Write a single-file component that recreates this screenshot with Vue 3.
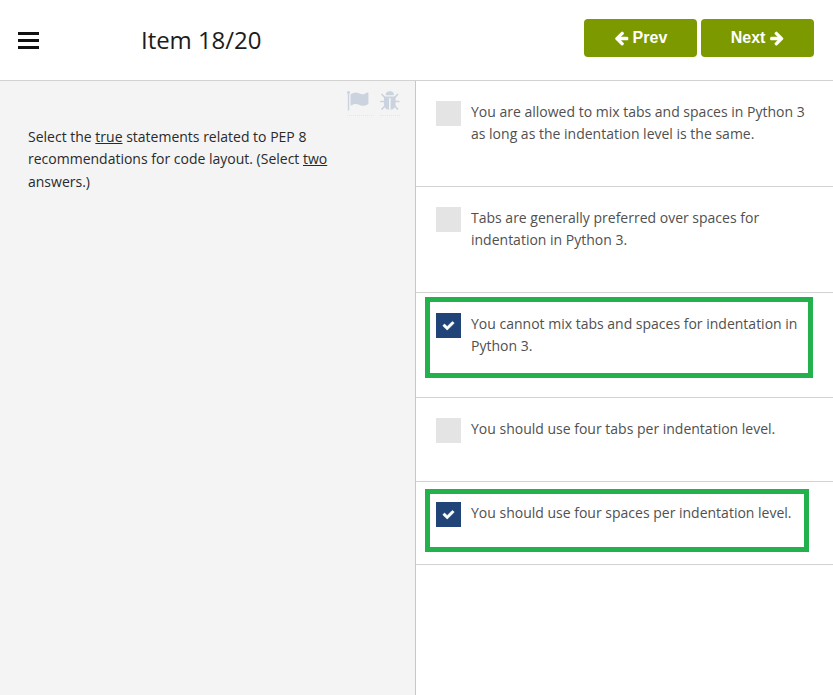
<script setup>
import { ref } from 'vue'

const options = ref([
  { text: 'You are allowed to mix tabs and spaces in Python 3 as long as the indentation level is the same.', checked: false },
  { text: 'Tabs are generally preferred over spaces for indentation in Python 3.', checked: false },
  { text: 'You cannot mix tabs and spaces for indentation in Python 3.', checked: true, mark: 'tall' },
  { text: 'You should use four tabs per indentation level.', checked: false },
  { text: 'You should use four spaces per indentation level.', checked: true, mark: 'short' },
])
</script>

<template>
  <div class="page">
    <header class="header">
      <svg class="menu" viewBox="0 0 21 18" fill="#111"><path d="M0 0h21v3H0zM0 7h21v3H0zM0 14h21v3H0z" /></svg>
      <h1 class="title">Item 18/20</h1>
      <nav class="nav">
        <button class="btn">
          <svg class="arrow" viewBox="64 0 1664 1792"><path d="M1664 896v128q0 53-32.5 90.5t-84.5 37.5h-704l293 294q38 36 38 90t-38 90l-75 76q-37 37-90 37-52 0-91-37l-651-652q-37-37-37-90 0-52 37-91l651-650q38-38 91-38 52 0 90 38l75 74q38 38 38 91t-38 91l-293 293h704q52 0 84.500 37.500t32.500 90.500z" /></svg>
          <span>Prev</span>
        </button>
        <button class="btn">
          <span>Next</span>
          <svg class="arrow" viewBox="0 0 1664 1792"><path d="M1600 960q0 54-37 91l-651 651q-39 37-91 37-51 0-90-37l-75-75q-38-38-38-91t38-91l293-293h-704q-52 0-84.500-37.500t-32.500-90.500v-128q0-53 32.500-90.500t84.500-37.500h704l-293-294q-38-36-38-90t38-90l75-75q38-38 90-38 53 0 91 38l651 651q37 35 37 90z" /></svg>
        </button>
      </nav>
    </header>
    <main class="main">
      <section class="question">
        <div class="tools">
          <span class="tool flag">
            <svg width="22" height="20" viewBox="0 0 22 20" fill="#cbd3df">
              <path d="M0 1.500a1.500 1.500 0 0 1 3 0q0 .8-.8 1.300V19q0 .5-.5.5h-.4q-.5 0-.5-.5V2.800Q0 2.300 0 1.500z" />
              <path d="M3.500 3.300Q6.500 1.500 8.700 1.500c2.800 0 4 1.700 6.500 1.700 2 0 3.600-1 5.300-1.800q.9-.2.9.7v10.300q0 .6-.5.800c-1.800.9-3.500 1.600-5.400 1.600-2.900 0-4.100-1.700-7-1.700-1.500 0-3 .7-4.300 1.500q-.7.3-.7-.5z" />
            </svg>
          </span>
          <span class="tool bug">
            <svg width="20" height="20" viewBox="0 0 20 20">
              <path d="M5.700 4.300a4.100 4.100 0 0 1 8.200 0z" fill="#cbd3df" />
              <path d="M4 5.500h11.600v7.500q0 5.300-5 5.700V7H9v11.700Q4 18.300 4 13z" fill="#cbd3df" />
              <path d="M2 3.500l3.300 3.300M17.600 3.500l-3.300 3.300M0.800 10.500h4.500M18.800 10.500h-4.500M5.300 14.500l-3.200 3.500M14.300 14.500l3.200 3.500" fill="none" stroke="#cbd3df" stroke-width="1.700" stroke-linecap="round" />
            </svg>
          </span>
        </div>
        <p class="prompt">Select the <u>true</u> statements related to PEP 8 recommendations for code layout. (Select <u>two</u> answers.)</p>
      </section>
      <section class="options">
        <div v-for="option in options" :key="option.text" class="option">
          <span class="box" :class="{ checked: option.checked }">
            <svg v-if="option.checked" width="13" height="13" viewBox="0 0 1792 1792"><path fill="#fff" stroke="#fff" stroke-width="50" d="M1671 566q0 40-28 68l-724 724-136 136q-28 28-68 28t-68-28l-136-136-362-362q-28-28-28-68t28-68l136-136q28-28 68-28t68 28l294 295 656-657q28-28 68-28t68 28l136 136q28 28 28 68z" /></svg>
          </span>
          <span class="label">{{ option.text }}</span>
          <span v-if="option.mark" class="highlight" :class="option.mark"></span>
        </div>
      </section>
    </main>
  </div>
</template>

<style>
body {
  background: #fff;
}
</style>

<style scoped>
.page {
  display: flex;
  flex-direction: column;
  height: 695px;
  overflow: hidden;
  font-family: 'Open Sans', sans-serif;
  font-size: 14px;
}
.header {
  box-sizing: border-box;
  display: flex;
  align-items: center;
  height: 81px;
  padding: 0 19px 0 18px;
  border-bottom: 1px solid #d2d2d2;
}
.menu {
  width: 21px;
  height: 18px;
  margin-top: 2px;
}
.title {
  margin: 0 0 0 102px;
  color: #1c1c1c;
  font-size: 24px;
  font-weight: 400;
  line-height: 34px;
  letter-spacing: -0.050px;
}
.nav {
  display: flex;
  gap: 4px;
  margin: 0 0 4px auto;
}
.btn {
  display: flex;
  align-items: center;
  justify-content: center;
  gap: 4px;
  width: 113px;
  height: 38px;
  padding: 0;
  border: 0;
  border-radius: 4px;
  background: #7c9a00;
  color: #fff;
  font: bold 16px/20px 'Liberation Sans', sans-serif;
}
.arrow {
  width: 14.900px;
  height: 16px;
  fill: #fff;
}
.main {
  display: flex;
  flex: 1;
}
.question {
  box-sizing: border-box;
  width: 416px;
  padding: 10px 15px 0 28px;
  border-right: 1px solid #c8c8c8;
  background: #f4f4f4;
}
.tools {
  display: flex;
  justify-content: flex-end;
  gap: 6px;
}
.tool {
  height: 24px;
  border-bottom: 1px dotted #e3e6ea;
}
.flag {
  width: 27px;
}
.tool svg {
  display: block;
}
.prompt {
  width: 310px;
  margin: 10px 0 0;
  color: #2a2a2a;
  line-height: 22.400px;
}
.options {
  display: grid;
  flex: 1;
  grid-template-rows: 106px 106px 105px 84px 83px;
  align-content: start;
}
.option {
  position: relative;
  display: flex;
  gap: 10px;
  padding: 20px 20px 0;
  border-bottom: 1px solid #d2d2d2;
}
.box {
  display: flex;
  flex: none;
  align-items: center;
  justify-content: center;
  width: 25px;
  height: 25px;
  background: #e4e4e4;
}
.box.checked {
  background: #204378;
}
.label {
  color: #505050;
  line-height: 22px;
}
.highlight {
  position: absolute;
  left: 9px;
  box-sizing: border-box;
  border: 5px solid #22b14c;
}
.tall {
  top: 4px;
  width: 388px;
  height: 81px;
}
.short {
  top: 7px;
  width: 384px;
  height: 63px;
}
</style>
